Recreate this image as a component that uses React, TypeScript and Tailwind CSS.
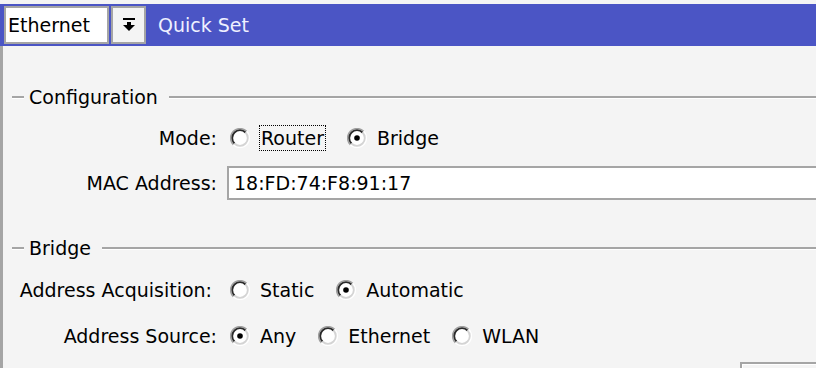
import React from "react";

function Radio({ checked }: { checked?: boolean }) {
  return (
    <svg width="20" height="20" viewBox="0 0 20 20" className="shrink-0">
      <circle cx="10" cy="10" r="8" fill="#ffffff" />
      <path d="M3.3 16.7 A9.2 9.2 0 0 1 16.7 3.3" fill="none" stroke="#a0a0a0" strokeWidth="1.4" />
      <path d="M16.7 3.3 A9.2 9.2 0 0 1 3.3 16.7" fill="none" stroke="#ffffff" strokeWidth="1.4" />
      <path d="M4.5 15.5 A7.6 7.6 0 0 1 15.5 4.5" fill="none" stroke="#2a2a2a" strokeWidth="1.8" />
      <path d="M15.5 4.5 A7.6 7.6 0 0 1 4.5 15.5" fill="none" stroke="#d4d4d4" strokeWidth="1.8" />
      {checked && <circle cx="10" cy="10" r="2.8" fill="#000" />}
    </svg>
  );
}

function Option({ label, checked, focus }: { label: string; checked?: boolean; focus?: boolean }) {
  return (
    <div className="flex items-center gap-[10px]">
      <Radio checked={checked} />
      <span className={focus ? "outline-1 outline-dotted outline-black px-[1px] leading-[24px]" : "leading-[24px]"}>{label}</span>
    </div>
  );
}

function Legend({ label }: { label: string }) {
  return (
    <div className="flex items-center h-[22px]">
      <div className="ml-[9px] w-[12px] border-t-2 border-b border-t-[#a5a5a5] border-b-white" />
      <span className="px-[5px] leading-[22px]">{label}</span>
      <div className="flex-1 ml-[6px] border-t-2 border-b border-t-[#a5a5a5] border-b-white" />
    </div>
  );
}

function Row({ label, children, labelPad }: { label: string; children: React.ReactNode; labelPad?: boolean }) {
  return (
    <div className="flex items-center h-[30px]">
      <div className={labelPad ? "w-[214px] text-right pr-[5px]" : "w-[214px] text-right"}>{label}</div>
      <div className="ml-[13px] flex items-center gap-[22px]">{children}</div>
    </div>
  );
}

export default function App() {
  return (
    <div
      className="w-[816px] h-[368px] overflow-hidden bg-[#f4f4f4] text-black text-[19px]"
      style={{ fontFamily: '"DejaVu Sans", Verdana, sans-serif' }}
    >
      <div className="h-[4px]" />
      <div className="h-[42px] bg-[#4b55c5] flex items-center pl-[4px]">
        <div className="w-[105px] h-[38px] bg-white border-2 border-[#a5a5a5] flex items-center pl-[2px] leading-none">
          Ethernet
        </div>
        <div className="ml-[2px] w-[35px] h-[38px] bg-[#f4f4f4] border-2 border-[#a5a5a5] flex items-center justify-center">
          <svg width="12" height="14" viewBox="0 0 12 14">
            <rect x="0" y="0" width="12" height="2" fill="#000" />
            <rect x="4" y="4" width="4" height="4" fill="#000" />
            <path d="M0 7 H12 L6 13 Z" fill="#000" />
          </svg>
        </div>
        <span className="ml-[12px] text-[#eef0ff]">Quick Set</span>
      </div>
      <div className="h-[322px] border-l-[3px] border-[#a5a5a5] flex flex-col">
        <div className="mt-[40px]">
          <Legend label="Configuration" />
        </div>
        <div className="mt-[15px]">
          <Row label="Mode:">
            <Option label="Router" focus />
            <Option label="Bridge" checked />
          </Row>
        </div>
        <div className="mt-[13px] flex items-center h-[34px]">
          <div className="w-[214px] text-right">MAC Address:</div>
          <div className="ml-[10px] flex-1 h-[34px] bg-white border-2 border-r-0 border-[#a5a5a5] flex items-center pl-[5px]">
            18:FD:74:F8:91:17
          </div>
        </div>
        <div className="mt-[37px]">
          <Legend label="Bridge" />
        </div>
        <div className="mt-[16px]">
          <Row label="Address Acquisition:" labelPad>
            <Option label="Static" />
            <Option label="Automatic" checked />
          </Row>
        </div>
        <div className="mt-[16px]">
          <Row label="Address Source:">
            <Option label="Any" checked />
            <Option label="Ethernet" />
            <Option label="WLAN" />
          </Row>
        </div>
        <div className="mt-[11px] flex justify-end">
          <div className="w-[76px] h-[20px] border-t-2 border-l-2 border-[#a5a5a5]">
            <div className="h-full border-t border-l border-white" />
          </div>
        </div>
      </div>
    </div>
  );
}
